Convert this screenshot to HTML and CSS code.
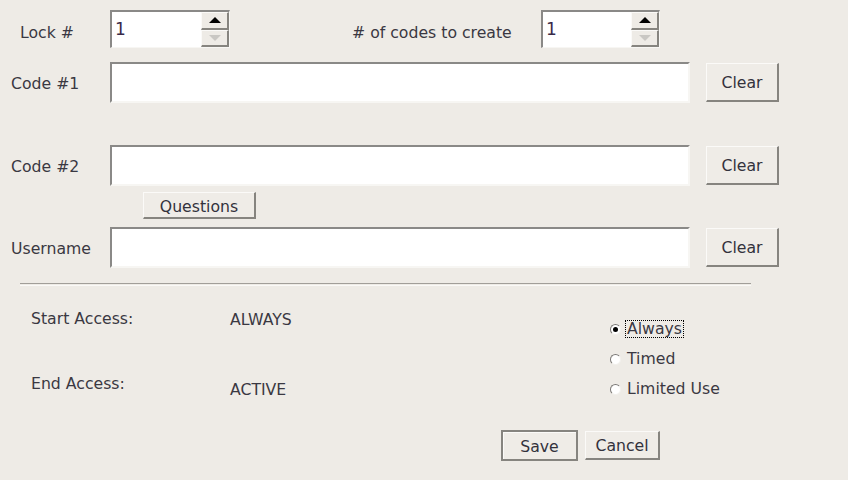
FILE: index.html
```html
<!DOCTYPE html>
<html>
<head>
<meta charset="utf-8">
<link rel="stylesheet" href="styles.css">
</head>
<body>
<div class="page">
  <div class="row top">
    <div class="lbl lbl-lock">Lock #</div>
    <div class="spinner">
      <div class="spin-text">1</div>
      <div class="spin-btns">
        <div class="spin-btn"><span class="arr up"></span></div>
        <div class="spin-btn"><span class="arr down"></span></div>
      </div>
    </div>
    <div class="lbl lbl-count">&#35; of codes to create</div>
    <div class="spinner spinner2">
      <div class="spin-text">1</div>
      <div class="spin-btns">
        <div class="spin-btn"><span class="arr up"></span></div>
        <div class="spin-btn"><span class="arr down"></span></div>
      </div>
    </div>
  </div>

  <div class="row field-row code1">
    <div class="lbl lbl-field">Code #1</div>
    <div class="field"></div>
    <div class="btn btn-clear">Clear</div>
  </div>

  <div class="row field-row code2">
    <div class="lbl lbl-field">Code #2</div>
    <div class="field"></div>
    <div class="btn btn-clear">Clear</div>
  </div>

  <div class="q-row">
    <div class="btn btn-q">Questions</div>
  </div>

  <div class="row field-row user">
    <div class="lbl lbl-field">Username</div>
    <div class="field"></div>
    <div class="btn btn-clear">Clear</div>
  </div>

  <div class="sep"></div>

  <div class="access">
    <div class="access-left">
      <div class="acc-row acc-start">
        <div class="acc-lbl">Start Access:</div>
        <div class="acc-val">ALWAYS</div>
      </div>
      <div class="acc-row acc-end">
        <div class="acc-lbl">End Access:</div>
        <div class="acc-val">ACTIVE</div>
      </div>
    </div>
    <div class="radios">
      <div class="radio-row"><span class="radio checked"></span><span class="radio-lbl focus">Always</span></div>
      <div class="radio-row"><span class="radio"></span><span class="radio-lbl">Timed</span></div>
      <div class="radio-row"><span class="radio"></span><span class="radio-lbl">Limited Use</span></div>
    </div>
  </div>

  <div class="actions">
    <div class="btn btn-save">Save</div>
    <div class="btn btn-cancel">Cancel</div>
  </div>
</div>
</body>
</html>
```

FILE: styles.css
```css
html, body {
  margin: 0;
  padding: 0;
  background: #eeebe6;
}
body {
  font-family: "DejaVu Sans", sans-serif;
  font-size: 15.7px;
  color: #3a3842;
  width: 848px;
  height: 480px;
  overflow: hidden;
}
.page {
  display: flex;
  flex-direction: column;
}
.row {
  display: flex;
  align-items: center;
}
.top {
  margin-top: 10px;
  height: 38px;
}
.lbl {
  box-sizing: border-box;
  flex: none;
}
.lbl-lock,
.lbl-count {
  padding-top: 6px;
}
.lbl-lock {
  width: 110px;
  padding-left: 20px;
}
.lbl-count {
  margin-left: 122px;
  width: 189px;
}
.spinner {
  box-sizing: border-box;
  width: 120px;
  height: 38px;
  display: flex;
  background: #fff;
  border-style: solid;
  border-width: 2px 1px 1px 2px;
  border-color: #8a8987 #f7f6f3 #f7f6f3 #8a8987;
}
.spinner2 {
  width: 119px;
}
.spin-text {
  flex: 1;
  padding-left: 3px;
  line-height: 34px;
  font-size: 17px;
  color: #3a2a48;
}
.spin-btns {
  width: 28px;
  display: flex;
  flex-direction: column;
}
.spin-btn {
  flex: 1;
  box-sizing: border-box;
  background: #eeebe6;
  border-style: solid;
  border-width: 1px 2px 2px 1px;
  border-color: #fbfaf8 #86847f #86847f #fbfaf8;
  display: flex;
  align-items: center;
  justify-content: center;
}
.arr {
  width: 0;
  height: 0;
  border-left: 6px solid transparent;
  border-right: 6px solid transparent;
}
.arr.up {
  border-bottom: 6px solid #000;
}
.arr.down {
  border-top: 6px solid #c9c7c3;
}
.field-row {
  height: 41px;
}
.code1 {
  margin-top: 14px;
}
.code2 {
  margin-top: 42px;
}
.user {
  margin-top: 8px;
}
.lbl-field {
  width: 110px;
  padding-left: 11px;
  padding-top: 2px;
}
.field {
  box-sizing: border-box;
  width: 580px;
  height: 41px;
  background: #fff;
  border-style: solid;
  border-width: 2px 2px 2px 2px;
  border-color: #8a8987 #f7f6f3 #f7f6f3 #8a8987;
}
.btn {
  box-sizing: border-box;
  display: flex;
  align-items: center;
  justify-content: center;
  background: #efece7;
  border-style: solid;
  border-width: 1px 2px 2px 1px;
  border-color: #fbfaf8 #86847f #86847f #fbfaf8;
  color: #33323c;
}
.btn-clear {
  margin-left: 16px;
  width: 73px;
  height: 39px;
}
.q-row {
  display: flex;
  margin-top: 6px;
  padding-left: 143px;
}
.btn-q {
  width: 113px;
  height: 27px;
  padding-top: 2px;
}
.sep {
  margin: 15px 0 0 20px;
  width: 731px;
  height: 1px;
  border-top: 1px solid #a19e99;
  border-bottom: 1px solid #faf9f7;
}
.access {
  display: flex;
  margin-top: 24px;
}
.access-left {
  width: 610px;
  padding-left: 31px;
  box-sizing: border-box;
}
.acc-row {
  display: flex;
  line-height: 18px;
}
.acc-lbl {
  width: 199px;
}
.acc-start .acc-val {
  margin-top: 1px;
}
.acc-end {
  margin-top: 46px;
}
.acc-end .acc-val {
  margin-top: 6px;
}
.radios {
  display: flex;
  flex-direction: column;
  margin-top: 10px;
}
.radio-row {
  display: flex;
  align-items: center;
  height: 18px;
  margin-bottom: 12px;
}
.radio {
  box-sizing: border-box;
  width: 11px;
  height: 11px;
  border-radius: 50%;
  background: #fff;
  border-style: solid;
  border-width: 1px;
  border-color: #7a7875 #f2f0ec #f2f0ec #7a7875;
  position: relative;
  margin-right: 7px;
}
.radio.checked::after {
  content: "";
  position: absolute;
  left: 2px;
  top: 2px;
  width: 5px;
  height: 5px;
  border-radius: 50%;
  background: #000;
}
.radio-lbl {
  padding: 0 1px;
  line-height: 16px;
  border: 1px solid transparent;
  margin-left: -3px;
}
.radio-lbl.focus {
  border: 1px dotted #000;
}
.actions {
  display: flex;
  align-items: center;
  margin-top: 20px;
  padding-left: 501px;
}
.btn-save {
  width: 77px;
  height: 31px;
  border-width: 2px 2px 2px 2px;
  border-color: #86847f #86847f #86847f #86847f;
  box-shadow: inset 1px 1px 0 #fbfaf8;
  padding-top: 1px;
}
.btn-cancel {
  margin-left: 7px;
  width: 75px;
  height: 29px;
}
```
